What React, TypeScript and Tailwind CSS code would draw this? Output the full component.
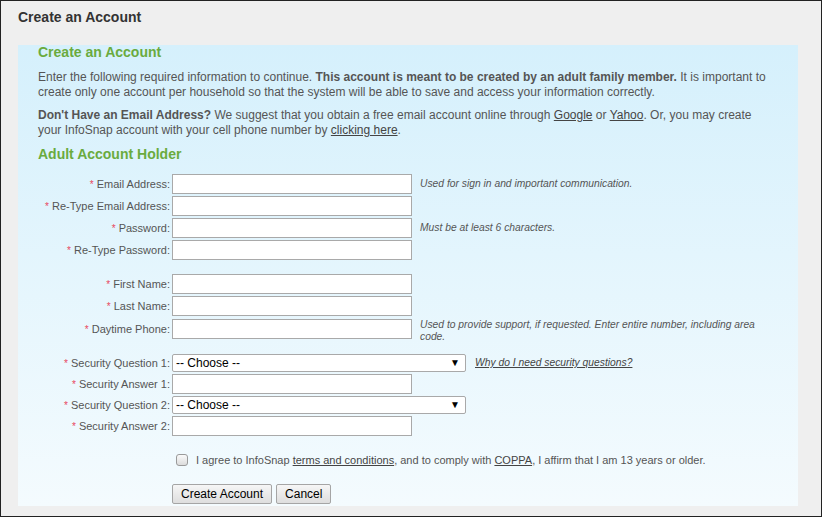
import React from "react";

const Req = () => <span className="text-[#e8475f] text-[10px] mr-[3px] leading-none">*</span>;

const Label: React.FC<{ text: string }> = ({ text }) => (
  <div className="w-[132px] h-[20px] shrink-0 text-right whitespace-nowrap leading-[20px] text-[11px]">
    <Req />
    {text}:
  </div>
);

const TextRow: React.FC<{
  label: string;
  help?: React.ReactNode;
  helpTop?: string;
  className?: string;
}> = ({ label, help, helpTop = "pt-[4px]", className = "" }) => (
  <div className={`flex items-start ${className}`}>
    <Label text={label} />
    <div className="ml-[2px] w-[240px] h-[20px] shrink-0 bg-white border border-[#a9a9a9]" />
    {help && (
      <div className={`ml-[8px] text-[10.3px] italic leading-[12px] text-[#555] ${helpTop}`}>{help}</div>
    )}
  </div>
);

const SelectRow: React.FC<{ label: string; extra?: React.ReactNode; className?: string }> = ({
  label,
  extra,
  className = "",
}) => (
  <div className={`flex items-center h-[18px] ${className}`}>
    <Label text={label} />
    <div className="ml-[2px] w-[294px] h-[18px] shrink-0 bg-white border border-[#a9a9a9] rounded-[2px] flex items-center justify-between pl-[3px] pr-[5px] text-black text-[12px]">
      <span>-- Choose --</span>
      <span className="text-[10px] leading-none">▼</span>
    </div>
    {extra}
  </div>
);

const btn =
  "h-[20px] px-[8px] border border-[#a5a5a5] rounded-[2px] bg-linear-to-b from-[#f6f6f6] to-[#dedede] text-black text-[12px] leading-none";

export default function App() {
  return (
    <div className="w-[822px] h-[517px] border border-[#222] bg-[#efefef] font-['Liberation_Sans',Arial,sans-serif] text-[12px] text-[#555] overflow-hidden">
      <div className="h-[44px] pl-[17px] pt-[8px] text-[14px] font-bold text-[#333] leading-[16px]">
        Create an Account
      </div>

      <div className="ml-[17px] w-[780px] h-[461px] bg-linear-to-b from-[#d5f0fc] to-[#f4fbfe] pl-[20px] pr-[18px]">
        <h2 className="text-[14px] font-bold text-[#6aab3e] leading-[14px]">Create an Account</h2>

        <p className="mt-[11px] leading-[15px] whitespace-nowrap">
          Enter the following required information to continue.{" "}
          <b>This account is meant to be created by an adult family member.</b> It is important to
          <br />
          create only one account per household so that the system will be able to save and access
          your information correctly.
        </p>

        <p className="mt-[8px] leading-[15px] whitespace-nowrap">
          <b>Don't Have an Email Address?</b> We suggest that you obtain a free email account online
          through <span className="underline text-[#444]">Google</span> or{" "}
          <span className="underline text-[#444]">Yahoo</span>. Or, you may create
          <br />
          your InfoSnap account with your cell phone number by{" "}
          <span className="underline text-[#444]">clicking here</span>.
        </p>

        <h3 className="mt-[8px] text-[14px] font-bold text-[#6aab3e] leading-[16px]">
          Adult Account Holder
        </h3>

        <div className="mt-[12px] flex flex-col">
          <TextRow label="Email Address" help="Used for sign in and important communication." />
          <TextRow label="Re-Type Email Address" className="mt-[2px]" />
          <TextRow label="Password" className="mt-[2px]" help="Must be at least 6 characters." />
          <TextRow label="Re-Type Password" className="mt-[2px]" />

          <TextRow label="First Name" className="mt-[14px]" />
          <TextRow label="Last Name" className="mt-[2px]" />
          <TextRow
            label="Daytime Phone"
            className="mt-[3px]"
            helpTop="pt-[0px]"
            help={
              <>
                Used to provide support, if requested. Enter entire number, including area
                <br />
                code.
              </>
            }
          />

          <SelectRow
            label="Security Question 1"
            className="mt-[11px]"
            extra={
              <span className="ml-[9px] text-[10.3px] italic underline text-[#444]">
                Why do I need security questions?
              </span>
            }
          />
          <TextRow label="Security Answer 1" className="mt-[2px]" />
          <SelectRow label="Security Question 2" className="mt-[2px]" />
          <TextRow label="Security Answer 2" className="mt-[2px]" />

          <div className="mt-[18px] flex items-center h-[12px] pl-[138px]">
            <span className="w-[12px] h-[12px] rounded-[3px] border border-[#9a9a9a] bg-linear-to-b from-[#fafafa] to-[#dcdcdc] shrink-0" />
            <span className="ml-[8px] whitespace-nowrap text-[11px]">
              I agree to InfoSnap <span className="underline text-[#444]">terms and conditions</span>,
              and to comply with <span className="underline text-[#444]">COPPA</span>, I affirm that I
              am 13 years or older.
            </span>
          </div>

          <div className="mt-[18px] flex pl-[134px] gap-[4px]">
            <button className={btn}>Create Account</button>
            <button className={btn}>Cancel</button>
          </div>
        </div>
      </div>
    </div>
  );
}
